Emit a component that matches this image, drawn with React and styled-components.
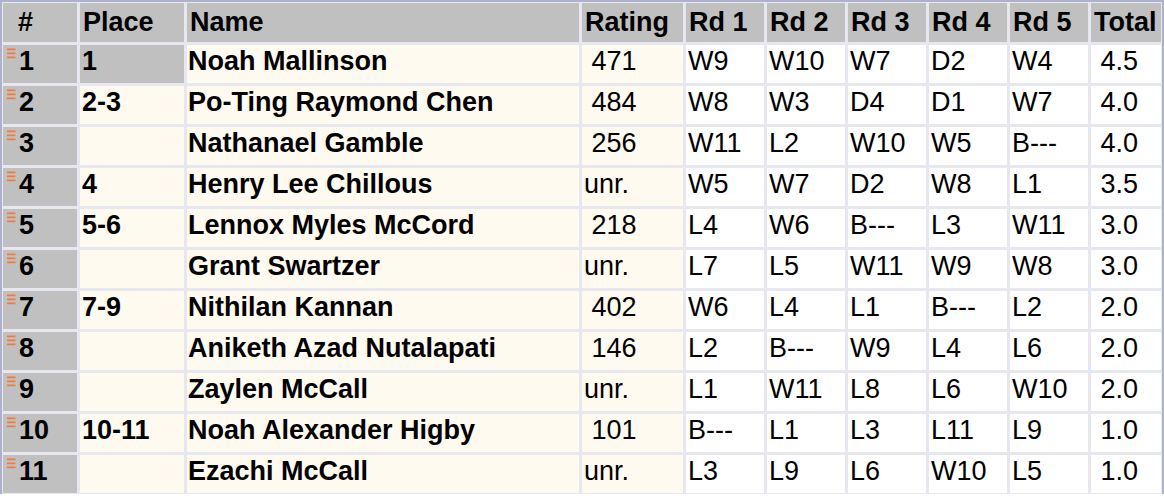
import React from 'react';
import styled, { createGlobalStyle } from 'styled-components';

const GlobalStyle = createGlobalStyle`
    html, body {
        margin: 0;
        padding: 0;
        background: #ffffff;
        overflow: hidden;
    }
`;

const COLUMNS = '74px 104px 392px 101px repeat(5, 78px) 70px';

const Table = styled.div`
    display: flex;
    flex-direction: column;
    gap: 3px;
    width: 1164px;
    box-sizing: border-box;
    padding: 1px;
    background: #e6e7ef;
    border-top: 2px solid #aeb1cd;
    border-left: 2px solid #aeb1cd;
    border-right: 2px solid #aeb1cd;
    font-family: "Liberation Sans", Arial, sans-serif;
    font-size: 27px;
    color: #000;
`;

const Row = styled.div`
    display: grid;
    grid-template-columns: ${COLUMNS};
    gap: 3px;
    height: ${(p) => (p.$header ? '39px' : '38px')};
`;

const HeadCell = styled.div`
    display: flex;
    align-items: center;
    padding-left: ${(p) => p.$indent || 3}px;
    background: #c0c0c0;
    font-weight: bold;
    white-space: nowrap;
    overflow: hidden;
`;

const cellBg = {
    silver: '#c0c0c0',
    cream: '#fffaf0',
    white: '#ffffff',
};

const Cell = styled.div`
    display: flex;
    align-items: flex-start;
    padding: 1px 0 0 ${(p) => p.$pad ?? 2}px;
    background: ${(p) => cellBg[p.$tone || 'white']};
    font-weight: ${(p) => (p.$bold ? 'bold' : 'normal')};
    white-space: pre;
    overflow: hidden;
`;

const Handle = styled.svg`
    flex: none;
    width: 10px;
    height: 12px;
    margin: 2px 3px 0 2px;
`;

function HandleIcon() {
    return (
        <Handle viewBox="0 0 10 12">
            <rect x="1" y="0.5" width="8.5" height="1.7" fill="#f47a3c" />
            <rect x="1" y="4.5" width="8.5" height="1.7" fill="#f47a3c" />
            <rect x="1" y="8.5" width="8.5" height="1.7" fill="#f47a3c" />
        </Handle>
    );
}

const players = [
    [1, '1', 'Noah Mallinson', '471', ['W9', 'W10', 'W7', 'D2', 'W4'], '4.5'],
    [2, '2-3', 'Po-Ting Raymond Chen', '484', ['W8', 'W3', 'D4', 'D1', 'W7'], '4.0'],
    [3, '', 'Nathanael Gamble', '256', ['W11', 'L2', 'W10', 'W5', 'B---'], '4.0'],
    [4, '4', 'Henry Lee Chillous', 'unr.', ['W5', 'W7', 'D2', 'W8', 'L1'], '3.5'],
    [5, '5-6', 'Lennox Myles McCord', '218', ['L4', 'W6', 'B---', 'L3', 'W11'], '3.0'],
    [6, '', 'Grant Swartzer', 'unr.', ['L7', 'L5', 'W11', 'W9', 'W8'], '3.0'],
    [7, '7-9', 'Nithilan Kannan', '402', ['W6', 'L4', 'L1', 'B---', 'L2'], '2.0'],
    [8, '', 'Aniketh Azad Nutalapati', '146', ['L2', 'B---', 'W9', 'L4', 'L6'], '2.0'],
    [9, '', 'Zaylen McCall', 'unr.', ['L1', 'W11', 'L8', 'L6', 'W10'], '2.0'],
    [10, '10-11', 'Noah Alexander Higby', '101', ['B---', 'L1', 'L3', 'L11', 'L9'], '1.0'],
    [11, '', 'Ezachi McCall', 'unr.', ['L3', 'L9', 'L6', 'W10', 'L5'], '1.0'],
];

const headers = ['Place', 'Name', 'Rating', 'Rd 1', 'Rd 2', 'Rd 3', 'Rd 4', 'Rd 5', 'Total'];

// rating column pads numbers with a leading space, "unr." sits flush
const padNum = (v) => (/^\d/.test(v) ? '\u00a0' + v : v);

export default function App() {
    return (
        <>
            <GlobalStyle />
            <Table>
                <Row $header>
                    <HeadCell $indent={15}>#</HeadCell>
                    {headers.map((h) => (
                        <HeadCell key={h}>{h}</HeadCell>
                    ))}
                </Row>
                {players.map(([num, place, name, rating, rounds, total]) => (
                    <Row key={num}>
                        <Cell $tone="silver" $bold $pad={1}>
                            <HandleIcon />
                            {num}
                        </Cell>
                        <Cell $tone={num === 1 ? 'silver' : 'cream'} $bold>{place}</Cell>
                        <Cell $tone="cream" $bold $pad={1}>{name}</Cell>
                        <Cell $tone="cream">{padNum(rating)}</Cell>
                        {rounds.map((r, i) => (
                            <Cell key={i}>{r}</Cell>
                        ))}
                        <Cell>{padNum(total)}</Cell>
                    </Row>
                ))}
            </Table>
        </>
    );
}
